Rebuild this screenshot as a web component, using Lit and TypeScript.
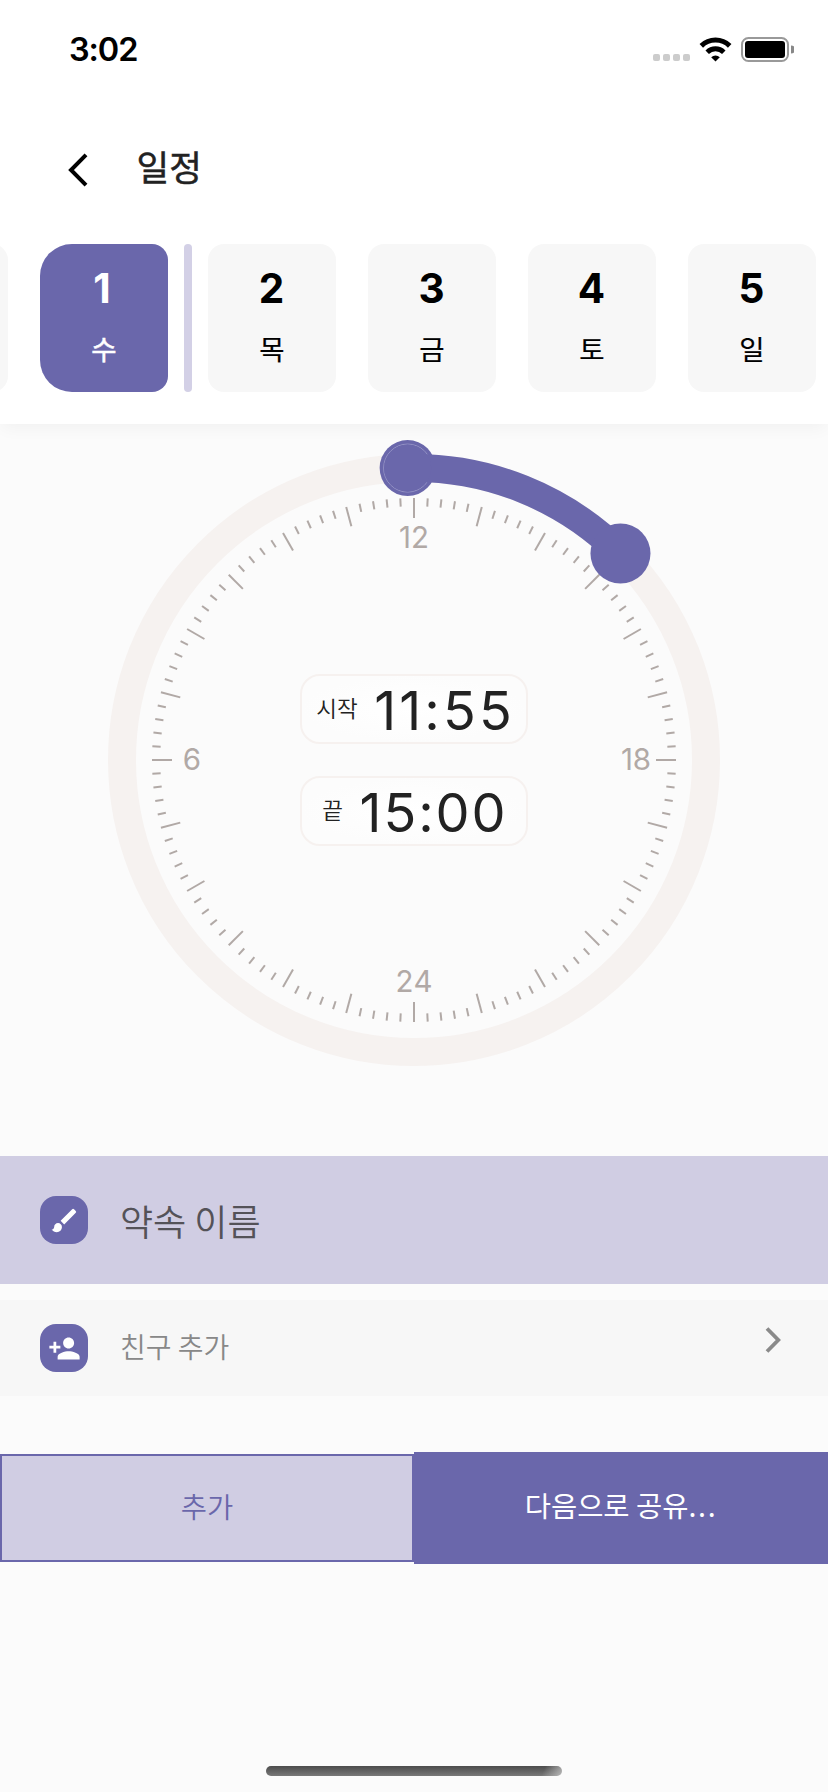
import { LitElement, html, css, svg } from "lit";
import { customElement } from "lit/decorators.js";
import { classMap } from "lit/directives/class-map.js";

const CENTER = 306;
const RING = 292;

const polar = (deg: number, r: number) => {
  const a = (deg * Math.PI) / 180;
  return [CENTER + r * Math.sin(a), CENTER - r * Math.cos(a)];
};

@customElement("status-bar")
class StatusBar extends LitElement {
  static styles = css`
    :host { display: flex; justify-content: space-between; align-items: flex-start; height: 100px; padding: 0 34px 0 69px; box-sizing: border-box; }
    .time { margin-top: 30px; font: 600 32.5px/40px Inter, sans-serif; letter-spacing: -1.1px; color: #000; }
    svg { display: block; margin-top: 36px; }
  `;
  render() {
    return html`
      <span class="time">3:02</span>
      <svg width="142" height="28" viewBox="652 36 142 28">
        <g fill="#ccc">
          ${[653, 663, 673, 683].map((x) => svg`<rect x=${x} y="54" width="7" height="7" rx="2" />`)}
        </g>
        <g fill="none" stroke="#000" stroke-width="5">
          <path d="M701.3 45.9a20.3 20.3 0 0 1 28.4 0" />
          <path d="M707.2 52.2a12 12 0 0 1 16.6 0" />
        </g>
        <path d="M711.2 57.3a6.3 6.3 0 0 1 8.6 0l-4.3 4.2z" />
        <rect x="742" y="38" width="46" height="23" rx="6.5" fill="none" stroke="#999" stroke-width="2" />
        <rect x="745" y="41" width="40" height="17" rx="3" />
        <path d="M791 45.5a4 4 0 0 1 0 8z" fill="#888" />
      </svg>
    `;
  }
}

@customElement("day-strip")
class DayStrip extends LitElement {
  static styles = css`
    :host { display: flex; gap: 32px; height: 148px; overflow: hidden; }
    .day { flex: none; box-sizing: border-box; width: 128px; height: 148px; padding-top: 21px; border-radius: 16px; background: #f7f7f7; color: #000; display: flex; flex-direction: column; align-items: center; }
    .lead { margin-left: -120px; }
    .selected { background: #6a67ab; color: #fff; border-radius: 32px 16px 16px 32px; }
    .num { font: 700 40.5px/48px Inter, sans-serif; margin-left: -1px; }
    .name { margin-top: 15px; font: 400 27.5px/40px "Noto Sans CJK KR", sans-serif; -webkit-text-stroke: 0.2px currentColor; }
    .selected .name { -webkit-text-stroke-width: 0.5px; }
    .selected .num { margin-left: -4px; }
    .mark { flex: none; width: 8px; border-radius: 4px; background: #d3d0e6; margin: 0 -16px; }
  `;
  days = [["1", "수"], ["2", "목"], ["3", "금"], ["4", "토"], ["5", "일"]];
  render() {
    return html`
      <div class="day lead"></div>
      ${this.days.map(
        ([n, d], i) => html`
          <div class=${classMap({ day: true, selected: i === 0 })}>
            <span class="num">${n}</span><span class="name">${d}</span>
          </div>
          ${i === 0 ? html`<div class="mark"></div>` : ""}
        `
      )}
    `;
  }
}

@customElement("time-dial")
class TimeDial extends LitElement {
  static styles = css`
    :host { display: grid; place-items: center; width: 628px; height: 628px; }
    svg, .times { grid-area: 1 / 1; }
    svg { display: block; overflow: visible; }
    .label { font: 400 29.5px Inter, sans-serif; font-kerning: none; fill: #b1a9a6; text-anchor: middle; }
    .times { display: flex; flex-direction: column; gap: 32px; }
    .slot { box-sizing: border-box; width: 228px; height: 70px; border: 2px solid #f6f1ef; border-radius: 20px; display: flex; align-items: center; justify-content: center; gap: 16.5px; color: #222; background: radial-gradient(closest-side, #fff, #fcfcfc); }
    .cap { font: 350 22.5px/32px "Noto Sans CJK KR", sans-serif; margin-top: -5px; }
    .val { font: 400 54px/66px Inter, sans-serif; font-kerning: none; letter-spacing: 1.9px; margin: 4px -1.9px 0 0; }
    .start .val { letter-spacing: 3.1px; margin-right: -3.1px; }
  `;
  render() {
    const ticks = Array.from({ length: 120 }, (_, i) => {
      const [x1, y1] = polar(i * 3, 262);
      const [x2, y2] = polar(i * 3, i % 5 ? 253.7 : 242);
      return svg`<line x1=${x1} y1=${y1} x2=${x2} y2=${y2} />`;
    });
    const [sx, sy] = polar(-1.25, RING);
    const [ex, ey] = polar(45, RING);
    return html`
      <svg width="612" height="612" viewBox="0 0 612 612">
        <circle cx=${CENTER} cy=${CENTER} r=${RING} fill="none" stroke="#f6f2f0" stroke-width="28" />
        <g stroke="#b1a9a6" stroke-width="2">${ticks}</g>
        <text class="label" x="306" y="94">12</text>
        <text class="label" x="528" y="316.3">18</text>
        <text class="label" x="306" y="538.3">24</text>
        <text class="label" x="84" y="316.3">6</text>
        <circle cx=${sx} cy=${sy} r="28" fill="#6a67ab" />
        <circle cx=${sx} cy=${sy} r="24" fill="none" stroke="#a09ecb" stroke-width="0.8" />
        <path d="M${sx} ${sy}A${RING} ${RING} 0 0 1 ${ex} ${ey}" fill="none" stroke="#6a67ab" stroke-width="28" />
        <circle cx=${sx} cy=${sy} r="23.6" fill="#6a67ab" />
        <circle cx=${ex} cy=${ey} r="30" fill="#6a67ab" />
      </svg>
      <div class="times">
        <div class="slot start"><span class="cap">시작</span><span class="val">11:55</span></div>
        <div class="slot"><span class="cap">끝</span><span class="val">15:00</span></div>
      </div>
    `;
  }
}

@customElement("app-root")
class AppRoot extends LitElement {
  static styles = css`
    :host { display: flex; flex-direction: column; height: 1792px; width: 828px; overflow: hidden; background: #fbfbfb; font-family: "Noto Sans CJK KR", sans-serif; }
    .top { height: 424px; background: #fff; box-shadow: 0 6px 16px -2px rgba(0, 0, 0, 0.045); }
    .nav { display: flex; align-items: center; height: 140px; padding-left: 64px; box-sizing: border-box; }
    .title { font-size: 35.5px; line-height: 52px; font-weight: 400; -webkit-text-stroke: 0.5px #222; color: #222; margin: -9px 0 0 44.5px; }
    day-strip { margin-top: 4px; }
    .dial { display: flex; justify-content: center; padding-top: 22px; }
    .row { display: flex; align-items: center; box-sizing: border-box; padding: 0 40px; }
    .name { height: 128px; margin-top: 82px; background: #d0cde3; font-size: 36px; font-weight: 350; color: #545258; }
    .friends { height: 96px; margin-top: 16px; background: #f7f7f7; font-size: 28px; font-weight: 350; color: #888; }
    .icon { display: grid; place-items: center; width: 48px; height: 48px; margin-right: 32px; border-radius: 16px; background: #6a67ab; }
    .grow { flex: 1; margin-top: -4px; }
    .chev { margin: -16px 6px 0 0; }
    svg { display: block; }
    .actions { display: flex; align-items: center; margin-top: 56px; }
    .btn { flex: 1; box-sizing: border-box; height: 108px; display: grid; place-items: center; font-size: 28.5px; font-weight: 350; border: 2px solid #6a67ab; background: #d0cde3; color: #6a67ab; padding-bottom: 5px; }
    .share { height: 112px; background: #6a67ab; color: #fff; font-weight: 400; padding-bottom: 7px; }
    .dots { letter-spacing: 1.7px; }
    .home { width: 296px; height: 10px; border-radius: 5px; margin: auto auto 16px; background: linear-gradient(115deg, transparent 93%, rgba(190, 190, 190, 0.9)), linear-gradient(#4c4c4c, #787878); }
  `;
  render() {
    return html`
      <div class="top">
        <status-bar></status-bar>
        <div class="nav">
          <svg width="28" height="40" viewBox="0 0 28 40"><path d="M22 4.8 7 20l15 15.2" fill="none" stroke="#000" stroke-width="4" /></svg>
          <div class="title">일정</div>
        </div>
        <day-strip></day-strip>
      </div>
      <div class="dial"><time-dial></time-dial></div>
      <div class="row name">
        <div class="icon">
          <svg width="31" height="31" viewBox="0 0 24 24" fill="#fff"><path d="M7 14c-1.66 0-3 1.34-3 3 0 1.31-1.16 2-2 2 .92 1.22 2.49 2 4 2 2.21 0 4-1.79 4-4 0-1.66-1.34-3-3-3zm13.71-9.37-1.34-1.34a1 1 0 0 0-1.41 0L9 12.25 11.75 15l8.96-8.96a1 1 0 0 0 0-1.41z" /></svg>
        </div>
        <span>약속 이름</span>
      </div>
      <div class="row friends">
        <div class="icon">
          <svg width="33" height="33" viewBox="0 0 24 24" fill="#fff"><path d="M15 12c2.21 0 4-1.79 4-4s-1.79-4-4-4-4 1.79-4 4 1.79 4 4 4zm-9-2V7H4v3H1v2h3v3h2v-3h3v-2H6zm9 4c-2.67 0-8 1.34-8 4v2h16v-2c0-2.66-5.33-4-8-4z" /></svg>
        </div>
        <span class="grow">친구 추가</span>
        <svg class="chev" width="18" height="32" viewBox="0 0 18 32"><path d="M3 4.5 14.3 16 3 27.5" fill="none" stroke="#8a8a8a" stroke-width="3.8" /></svg>
      </div>
      <div class="actions">
        <div class="btn">추가</div>
        <div class="btn share"><span>다음으로 공유<span class="dots">...</span></span></div>
      </div>
      <div class="home"></div>
    `;
  }
}
